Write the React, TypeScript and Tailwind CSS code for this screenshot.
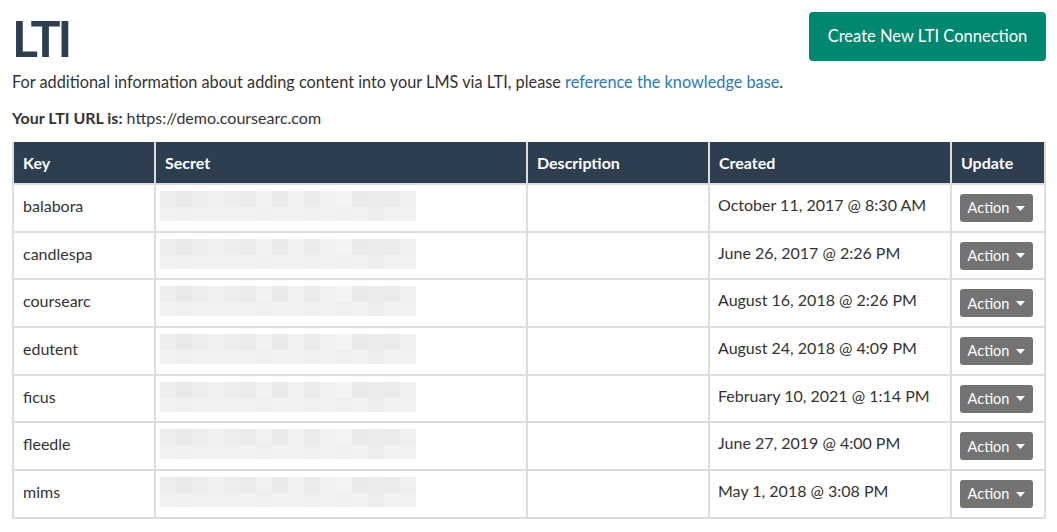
import React from "react";

const rows = [
  { key: "balabora", created: "October 11, 2017 @ 8:30 AM" },
  { key: "candlespa", created: "June 26, 2017 @ 2:26 PM" },
  { key: "coursearc", created: "August 16, 2018 @ 2:26 PM" },
  { key: "edutent", created: "August 24, 2018 @ 4:09 PM" },
  { key: "ficus", created: "February 10, 2021 @ 1:14 PM" },
  { key: "fleedle", created: "June 27, 2019 @ 4:00 PM" },
  { key: "mims", created: "May 1, 2018 @ 3:08 PM" },
];

const topRow = ["#eeeeec", "#e8e9eb", "#eceded", "#eef0f1", "#ebeeed", "#e9ebed", "#f2f2f0", "#e8eaec", "#f0f2f1", "#e9ebed", "#f0f2f1", "#f3f4f4", "#e9eaec", "#ebeced", "#e9ebed", "#eeefef"];
const botRow = ["#f1f2f2", "#eff1f0", "#f1f1f1", "#f0f2f1", "#f1f2f2", "#f1f1f1", "#efefef", "#f1f2f2", "#f1f2f2", "#eff1f0", "#f1f2f2", "#eef0f0", "#f1f2f2", "#ededeb", "#f1f3f3", "#eff1f3"];

function Blur() {
  return (
    <div className="flex flex-col w-[256px]">
      <div className="flex h-[16px]">
        {topRow.map((c, i) => (
          <div key={i} className="w-[16px] h-full" style={{ background: c }} />
        ))}
      </div>
      <div className="flex h-[14px]">
        {botRow.map((c, i) => (
          <div key={i} className="w-[16px] h-full" style={{ background: c }} />
        ))}
      </div>
    </div>
  );
}

export default function App() {
  return (
    <div className="bg-white w-[1057px] h-[532px] overflow-hidden px-3 text-[#333] text-[16px]" style={{ fontFamily: "Lato, 'Open Sans', sans-serif" }}>
      <div className="flex items-start justify-between h-[63px]">
        <h1 className="text-[50px] leading-none font-bold text-[#2c3e50] mt-[13px] tracking-[-3px]">LTI</h1>
        <button className="mt-[12px] mr-[-1px] h-[49px] w-[237px] rounded-[4px] bg-[#00876f] text-white text-[16.5px]">
          Create New LTI Connection
        </button>
      </div>
      <p className="mt-[8px] leading-[22px] text-[16.3px]">
        For additional information about adding content into your LMS via LTI, please{" "}
        <span className="text-[#2a7ab5]">reference the knowledge base</span>.
      </p>
      <p className="mt-[14px] leading-[22px]">
        <span className="font-bold">Your LTI URL is:</span> https://demo.coursearc.com
      </p>
      <table className="mt-[13px] border-collapse w-[1032px] table-fixed">
        <colgroup>
          <col className="w-[142px]" />
          <col className="w-[372px]" />
          <col className="w-[182px]" />
          <col className="w-[242px]" />
          <col className="w-[94px]" />
        </colgroup>
        <thead>
          <tr className="bg-[#2c3e50] text-white h-[42px]">
            {["Key", "Secret", "Description", "Created", "Update"].map((h) => (
              <th key={h} className="text-left font-bold px-[9px] border-2 border-[#dddddd] border-t-0 leading-[20px]">
                {h}
              </th>
            ))}
          </tr>
        </thead>
        <tbody>
          {rows.map((r) => (
            <tr key={r.key} className="h-[47.7px]">
              <td className="border-2 border-[#dddddd] px-[9px] align-top pt-[11px] leading-[20px]">{r.key}</td>
              <td className="border-2 border-[#dddddd] px-[4px] align-top pt-[6px]">
                <Blur />
              </td>
              <td className="border-2 border-[#dddddd]"></td>
              <td className="border-2 border-[#dddddd] px-[8px] align-top pt-[10px] leading-[20px]">{r.created}</td>
              <td className="border-2 border-[#dddddd] px-[8px] align-top pt-[9px]">
                <div className="flex items-center justify-center gap-[7px] w-[73px] h-[28px] rounded-[3px] bg-[#737373] text-white text-[14.5px]">
                  <span>Action</span>
                  <svg width="9" height="5" viewBox="0 0 9 5">
                    <path d="M0 0 L9 0 L4.5 5 Z" fill="white" />
                  </svg>
                </div>
              </td>
            </tr>
          ))}
        </tbody>
      </table>
    </div>
  );
}
